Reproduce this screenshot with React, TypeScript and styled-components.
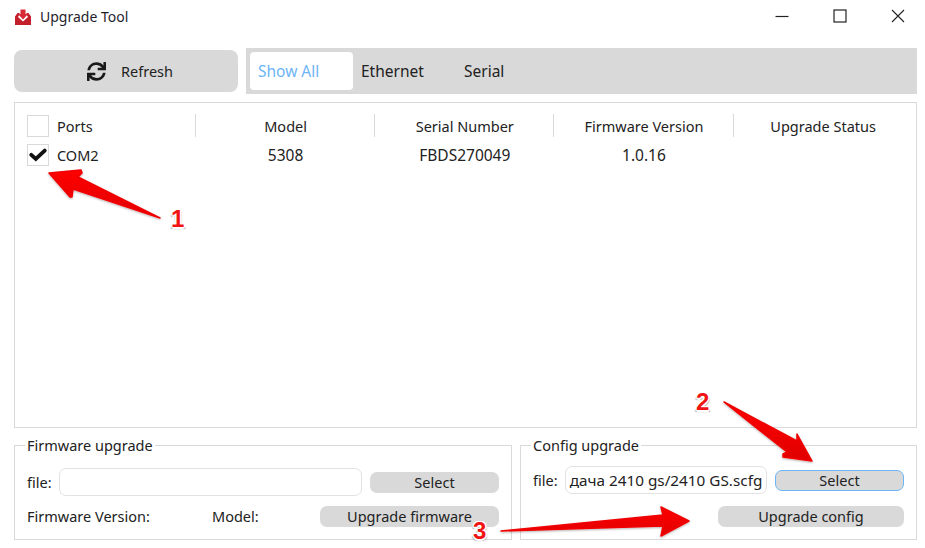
import React from "react";
import styled, { createGlobalStyle } from "styled-components";
import { FaSync } from "react-icons/fa";

const Global = createGlobalStyle`
  html, body { margin: 0; padding: 0; background: #fff; }
  body { font-family: "Noto Sans", "DejaVu Sans", sans-serif; font-size: 14.5px; color: #222; }
  * { box-sizing: border-box; }
`;

const Page = styled.div`
  position: relative;
  width: 925px;
  height: 548px;
  overflow: hidden;
  background: #fff;
  padding: 0 8px 0 14px;
  display: flex;
  flex-direction: column;
`;

const TitleBar = styled.div`
  height: 34px;
  display: flex;
  align-items: center;
  gap: 8px;
  font-size: 14px;
  color: #1f1f2e;
`;

const TitleText = styled.span`
  flex: 1;
  position: relative;
  top: -1px;
`;

const WindowButtons = styled.div`
  display: flex;
  align-items: center;
  gap: 44px;
  padding-right: 12px;
  margin-top: -3px;
`;

const Toolbar = styled.div`
  margin-top: 14px;
  height: 46px;
  display: flex;
  align-items: center;
  gap: 8px;
`;

const RefreshButton = styled.div`
  width: 224px;
  height: 42px;
  background: #d9d9d9;
  border-radius: 8px;
  display: flex;
  align-items: center;
  justify-content: center;
  gap: 15px;
  padding-left: 8px;
`;

const TabBar = styled.div`
  flex: 1;
  height: 46px;
  background: #d9d9d9;
  display: flex;
  align-items: center;
  padding-left: 4px;
  font-size: 15.5px;
`;

const Tab = styled.div<{ $active?: boolean; $width: number }>`
  width: ${(p) => p.$width}px;
  height: 38px;
  display: flex;
  align-items: center;
  border-radius: 4px;
  padding-left: 8px;
  background: ${(p) => (p.$active ? "#fff" : "transparent")};
  color: ${(p) => (p.$active ? "#6db5f5" : "#222")};
`;

const TablePanel = styled.div`
  margin-top: 8px;
  height: 326px;
  border: 1px solid #d9d9d9;
  padding-top: 11px;
`;

const Row = styled.div`
  display: grid;
  grid-template-columns: 180px repeat(4, 179.2px);
  height: 23px;
  align-items: center;
  margin-bottom: 6px;
`;

const PortCell = styled.div`
  display: flex;
  align-items: center;
  gap: 8px;
  padding-left: 12px;
  height: 100%;
`;

const Cell = styled.div<{ $divider?: boolean }>`
  height: 100%;
  display: flex;
  align-items: center;
  justify-content: center;
  padding-left: 1px;
  border-left: ${(p) => (p.$divider ? "1px solid #d9d9d9" : "1px solid transparent")};
`;

const ValueCell = styled(Cell)`
  font-size: 15.5px;
`;

const Check = styled.div`
  width: 22px;
  height: 22px;
  border: 1px solid #d9d9d9;
  display: flex;
  align-items: center;
  justify-content: center;
  background: #fff;
`;

const Groups = styled.div`
  margin-top: 7px;
  display: flex;
  gap: 8px;
`;

const Group = styled.fieldset<{ $width: number }>`
  width: ${(p) => p.$width}px;
  height: 105px;
  margin: 0;
  padding: 0 12px;
  border: 1px solid #d9d9d9;
  min-width: 0;
`;

const Legend = styled.legend`
  padding: 0 2px;
  margin-left: -2px;
  font-size: 14.5px;
  line-height: 20px;
`;

const FileRow = styled.div<{ $top: number }>`
  display: flex;
  align-items: center;
  margin-top: ${(p) => p.$top}px;
  height: 28px;
`;

const FileLabel = styled.span`
  width: 32px;
  flex: none;
`;

const FileInput = styled.div<{ $width: number }>`
  width: ${(p) => p.$width}px;
  flex: none;
  height: 28px;
  border: 1px solid #e2e2e2;
  border-radius: 7px;
  background: #fff;
  overflow: hidden;
  display: flex;
  align-items: center;
  justify-content: center;
  white-space: nowrap;
  margin-right: 8px;
  font-size: 15.3px;
`;

const ActionRow = styled.div<{ $top: number }>`
  display: flex;
  align-items: center;
  margin-top: ${(p) => p.$top}px;
  height: 22px;
`;

const Spacer = styled.div`
  flex: 1;
`;

const InfoLabel = styled.span<{ $width: number }>`
  width: ${(p) => p.$width}px;
  flex: none;
`;

const Pill = styled.div<{ $width: number; $focus?: boolean }>`
  width: ${(p) => p.$width}px;
  height: 21px;
  flex: none;
  border-radius: 7px;
  background: #d9d9d9;
  border: ${(p) => (p.$focus ? "1.5px solid #6db5f5" : "none")};
  display: flex;
  align-items: center;
  justify-content: center;
`;

const Overlay = styled.svg`
  position: absolute;
  left: 0;
  top: 0;
  pointer-events: none;
`;

const Num = styled.span<{ $x: number; $y: number }>`
  position: absolute;
  left: ${(p) => p.$x}px;
  top: ${(p) => p.$y}px;
  font-family: "Liberation Sans", Arial, sans-serif;
  font-weight: 700;
  font-size: 24px;
  line-height: 26px;
  color: #f01414;
  text-shadow: -1.5px 0 0 #fff, 1.5px 0 0 #fff, 0 -1.5px 0 #fff, 0 1.5px 0 #fff,
    -1px -1px 0 #fff, 1px -1px 0 #fff, -1px 1px 0 #fff, 1px 1px 0 #fff,
    -1.5px 2px 1px #aaa, 1.5px 2px 1px #aaa;
`;

const AppIcon = () => (
  <svg width="18" height="17" viewBox="0 0 18 17">
    <path d="M1 7.5 L3.5 4 H5.5 V5.5 L4 8 L9 12.5 L14 8 L12.5 5.5 V4 H14.5 L17 7.5 V16 H1 Z" fill="#c4202c" />
    <path d="M6.5 0.5 H11.5 V5 H14 L9 10.5 L4 5 H6.5 Z" fill="#d92b35" />
  </svg>
);

const CheckMark = () => (
  <svg width="18" height="14" viewBox="0 0 18 14">
    <path d="M2.3 6.8 L6.8 11 L15.7 2.6" fill="none" stroke="#111" strokeWidth="3.8" strokeLinecap="round" strokeLinejoin="miter" />
  </svg>
);

const Minimize = () => (
  <svg width="14" height="14" viewBox="0 0 14 14"><path d="M0.5 7.5 H13.5" stroke="#222" strokeWidth="1.2" /></svg>
);
const Maximize = () => (
  <svg width="14" height="14" viewBox="0 0 14 14"><rect x="1" y="1" width="12" height="12" fill="none" stroke="#222" strokeWidth="1.2" /></svg>
);
const Close = () => (
  <svg width="14" height="14" viewBox="0 0 14 14"><path d="M1 1 L13 13 M13 1 L1 13" stroke="#222" strokeWidth="1.1" /></svg>
);

export default function App() {
  return (
    <>
      <Global />
      <Page>
        <TitleBar>
          <AppIcon />
          <TitleText>Upgrade Tool</TitleText>
          <WindowButtons>
            <Minimize />
            <Maximize />
            <Close />
          </WindowButtons>
        </TitleBar>
        <Toolbar>
          <RefreshButton>
            <FaSync size={19} color="#1a1a1a" />
            <span>Refresh</span>
          </RefreshButton>
          <TabBar>
            <Tab $active $width={103}>Show All</Tab>
            <Tab $width={103}>Ethernet</Tab>
            <Tab $width={100}>Serial</Tab>
          </TabBar>
        </Toolbar>
        <TablePanel>
          <Row>
            <PortCell><Check /><span>Ports</span></PortCell>
            <Cell $divider>Model</Cell>
            <Cell $divider>Serial Number</Cell>
            <Cell $divider>Firmware Version</Cell>
            <Cell $divider>Upgrade Status</Cell>
          </Row>
          <Row>
            <PortCell><Check><CheckMark /></Check><span>COM2</span></PortCell>
            <ValueCell>5308</ValueCell>
            <ValueCell>FBDS270049</ValueCell>
            <ValueCell>1.0.16</ValueCell>
            <ValueCell />
          </Row>
        </TablePanel>
        <Groups>
          <Group $width={498}>
            <Legend>Firmware upgrade</Legend>
            <FileRow $top={13}>
              <FileLabel>file:</FileLabel>
              <FileInput $width={303} />
              <Pill $width={129}>Select</Pill>
            </FileRow>
            <ActionRow $top={9}>
              <InfoLabel $width={185}>Firmware Version:</InfoLabel>
              <InfoLabel $width={108}>Model:</InfoLabel>
              <Pill $width={179}>Upgrade firmware</Pill>
            </ActionRow>
          </Group>
          <Group $width={397}>
            <Legend>Config upgrade</Legend>
            <FileRow $top={11}>
              <FileLabel>file:</FileLabel>
              <FileInput $width={202}>дача 2410 gs/2410 GS.scfg</FileInput>
              <Pill $width={129} $focus>Select</Pill>
            </FileRow>
            <ActionRow $top={11}>
              <Spacer />
              <Pill $width={186}>Upgrade config</Pill>
            </ActionRow>
          </Group>
        </Groups>
        <Overlay width="925" height="548" viewBox="0 0 925 548">
          <defs>
            <linearGradient id="redArrow" x1="0" y1="0" x2="0" y2="1">
              <stop offset="0" stopColor="#ff0000" />
              <stop offset="1" stopColor="#e00000" />
            </linearGradient>
            <filter id="arrowShadow" x="-10%" y="-10%" width="120%" height="130%">
              <feDropShadow dx="0" dy="1" stdDeviation="0.8" floodColor="#000" floodOpacity="0.3" />
            </filter>
          </defs>
          <g fill="url(#redArrow)" stroke="#f00000" strokeWidth="1.5" strokeLinejoin="round" filter="url(#arrowShadow)">
            <polygon points="49,173 81,170 82,173 78,177 160,218 73,189 72,197 70,197" />
            <polygon points="724,402 797,441 797,434 812,461 783,457 783,454 787,452" />
            <polygon points="501,531 663,515 661,507 689,521 661,536 663,526" />
          </g>
        </Overlay>
        <Num $x={171} $y={206}>1</Num>
        <Num $x={696} $y={389}>2</Num>
        <Num $x={473} $y={518}>3</Num>
      </Page>
    </>
  );
}
